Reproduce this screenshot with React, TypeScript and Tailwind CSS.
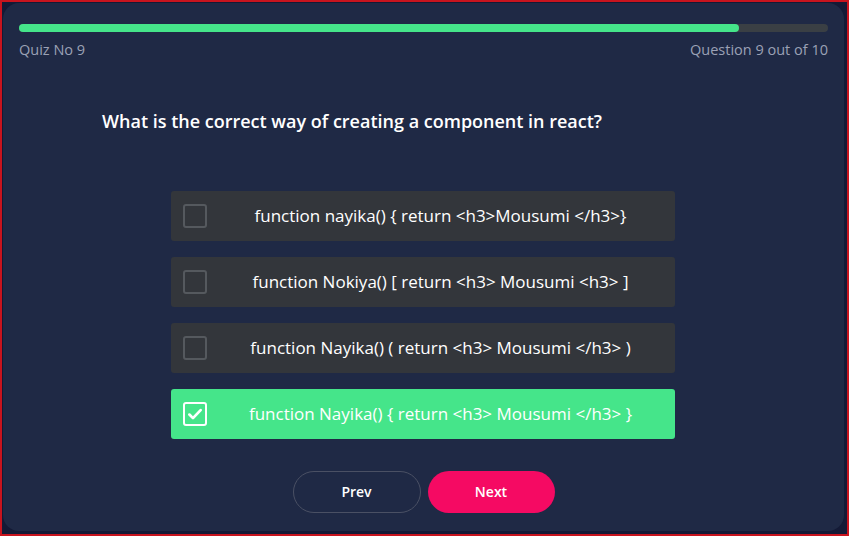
import React from 'react'

const options = [
	'function nayika() { return <h3>Mousumi </h3>}',
	'function Nokiya() [ return <h3> Mousumi <h3> ]',
	'function Nayika() ( return <h3> Mousumi </h3> )',
	'function Nayika() { return <h3> Mousumi </h3> }',
]

const App: React.FC = () => {
	const [selected, setSelected] = React.useState<number>(3)

	return (
		<div
			className="h-[536px] w-[849px] border-2 border-[#c8141e] bg-[#141a36] p-[1px]"
			style={{ fontFamily: '"Open Sans", "Liberation Sans", sans-serif' }}
		>
			<div className="mb-[2px] mr-[2px] flex h-[calc(100%-2px)] flex-col rounded-2xl bg-[#1f2945] pl-4 pr-4 pt-[21px]">
				{/* progress */}
				<div className="h-2 w-full rounded-full bg-[#3a3f44]">
					<div className="h-2 w-[89%] rounded-full bg-[#45e58a]" />
				</div>
				<div className="mt-[7px] flex justify-between text-[14.5px] text-[#9ba1b5]">
					<span>Quiz No 9</span>
					<span>Question 9 out of 10</span>
				</div>

				<h2 className="mt-[47px] pl-[83px] text-[18px] font-semibold text-white">
					What is the correct way of creating a component in react?
				</h2>

				<div className="mx-auto mt-[56px] flex w-[504px] -translate-x-px flex-col gap-4">
					{options.map((opt, idx) => {
						const active = idx === selected
						return (
							<button
								key={idx}
								onClick={() => setSelected(idx)}
								className={`flex h-[50px] items-center rounded-[3px] pl-3 ${
									active ? 'bg-[#45e58a]' : 'bg-[#33363b]'
								}`}
							>
								<span
									className={`flex h-6 w-6 shrink-0 items-center justify-center rounded-[3px] border-2 ${
										active ? 'border-white' : 'border-[#55595e]'
									}`}
								>
									{active && (
										<svg viewBox="0 0 16 16" className="h-[18px] w-[18px]" fill="none">
											<path d="M3 8.5l3.2 3.2L13 4.5" stroke="white" strokeWidth="2.4" strokeLinecap="round" strokeLinejoin="round" />
										</svg>
									)}
								</span>
								<span className="flex-1 text-center text-[17px] text-white">{opt}</span>
							</button>
						)
					})}
				</div>

				<div className="mt-8 flex justify-center gap-[7px]">
					<button className="h-[42px] w-[128px] rounded-full border border-[#4a5064] text-[14px] font-semibold text-white">
						Prev
					</button>
					<button className="h-[42px] w-[127px] rounded-full bg-[#f50a63] text-[14px] font-semibold text-white">
						Next
					</button>
				</div>
			</div>
		</div>
	)
}

export default App
